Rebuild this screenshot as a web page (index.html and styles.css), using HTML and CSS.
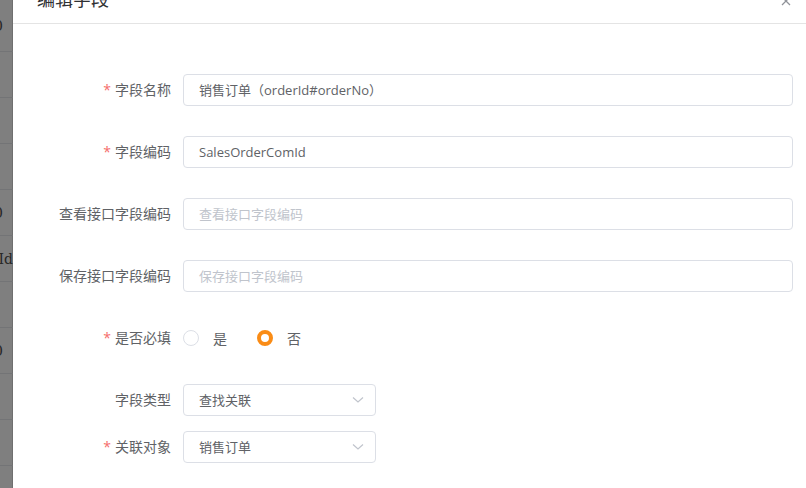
FILE: index.html
```html
<!DOCTYPE html>
<html>
<head>
    <title>编辑字段</title>
    <link rel="stylesheet" href="styles.css">
</head>
<body>
<div class="page">
    <div class="backdrop">
        <div class="bg-row bg-first"><span class="bg-text bg-round">0</span></div>
        <div class="bg-row"></div>
        <div class="bg-row"></div>
        <div class="bg-row"></div>
        <div class="bg-row"><span class="bg-text bg-round">0</span></div>
        <div class="bg-row"><span class="bg-text">orderId</span></div>
        <div class="bg-row"></div>
        <div class="bg-row"><span class="bg-text bg-round">0</span></div>
        <div class="bg-row"></div>
        <div class="bg-row"></div>
        <div class="bg-row"></div>
    </div>

    <div class="dialog">
        <div class="dialog-header">
            <span class="dialog-title">编辑字段</span>
            <span class="dialog-close">
                <svg width="10" height="10" viewBox="0 0 10 10">
                    <path d="M1 1 L9 9 M9 1 L1 9" stroke="#909399" stroke-width="1.3" fill="none"/>
                </svg>
            </span>
        </div>

        <div class="dialog-body">
            <div class="form-item">
                <label class="form-label required">字段名称</label>
                <div class="form-control">
                    <div class="input">销售订单（orderId#orderNo）</div>
                </div>
            </div>
            <div class="form-item">
                <label class="form-label required">字段编码</label>
                <div class="form-control">
                    <div class="input">SalesOrderComId</div>
                </div>
            </div>
            <div class="form-item">
                <label class="form-label">查看接口字段编码</label>
                <div class="form-control">
                    <div class="input placeholder">查看接口字段编码</div>
                </div>
            </div>
            <div class="form-item">
                <label class="form-label">保存接口字段编码</label>
                <div class="form-control">
                    <div class="input placeholder">保存接口字段编码</div>
                </div>
            </div>
            <div class="form-item">
                <label class="form-label required">是否必填</label>
                <div class="form-control radios">
                    <span class="radio"><span class="radio-dot"></span>是</span>
                    <span class="radio checked"><span class="radio-dot"></span>否</span>
                </div>
            </div>
            <div class="form-item tight">
                <label class="form-label">字段类型</label>
                <div class="form-control">
                    <div class="input select">查找关联
                        <svg class="arrow" width="12" height="8" viewBox="0 0 12 8">
                            <path d="M1 1.5 L6 6 L11 1.5" stroke="#c0c4cc" stroke-width="1.2" fill="none"/>
                        </svg>
                    </div>
                </div>
            </div>
            <div class="form-item">
                <label class="form-label required">关联对象</label>
                <div class="form-control">
                    <div class="input select">销售订单
                        <svg class="arrow" width="12" height="8" viewBox="0 0 12 8">
                            <path d="M1 1.5 L6 6 L11 1.5" stroke="#c0c4cc" stroke-width="1.2" fill="none"/>
                        </svg>
                    </div>
                </div>
            </div>
        </div>
    </div>
</div>
</body>
</html>
```

FILE: styles.css
```css
html, body {
    margin: 0;
    height: 100%;
    overflow: hidden;
    background: #ffffff;
    font-family: "Open Sans", "Noto Sans CJK SC", sans-serif;
}

.page {
    display: flex;
    height: 100%;
}

/* grey table behind the dialog */
.backdrop {
    width: 13px;
    flex-shrink: 0;
    background: #7f7f7f;
    overflow: hidden;
    box-shadow: inset -1px 0 0 #6f6f6f;
}
.bg-row {
    height: 45px;
    border-bottom: 1px solid #737476;
    display: flex;
    justify-content: flex-end;
    align-items: center;
}
.bg-first {
    height: 51px;
}
.bg-text {
    font-family: "DejaVu Serif", serif;
    font-size: 14px;
    color: #262626;
    white-space: nowrap;
}
.bg-round {
    margin-right: 10px;
}

.dialog {
    flex: 1;
    background: #ffffff;
}

.dialog-header {
    margin-top: -16px;
    height: 39px;
    border-bottom: 1px solid #e4e4e4;
    display: flex;
    justify-content: space-between;
    align-items: flex-start;
    padding: 0 15px 0 24px;
}
.dialog-title {
    padding-top: 3px;
    font-size: 18px;
    line-height: 24px;
    color: #303133;
}
.dialog-close {
    margin-top: 12px;
    line-height: 0;
}

.dialog-body {
    padding: 50px 13px 0 40px;
}

.form-item {
    display: flex;
    margin-bottom: 30px;
}
.form-item.tight {
    margin-bottom: 15px;
}
.form-label {
    width: 130px;
    flex-shrink: 0;
    box-sizing: border-box;
    padding-right: 12px;
    text-align: right;
    white-space: nowrap;
    font-size: 14px;
    line-height: 32px;
    color: #606266;
}
.form-label.required::before {
    content: "*";
    color: #f56c6c;
    margin-right: 4px;
}
.form-control {
    flex: 1;
}

.input {
    height: 32px;
    box-sizing: border-box;
    border: 1px solid #dcdfe6;
    border-radius: 4px;
    padding: 0 15px;
    font-size: 13px;
    line-height: 30px;
    color: #606266;
    white-space: nowrap;
}
.input.placeholder {
    color: #c0c4cc;
}
.input.select {
    width: 193px;
    display: flex;
    justify-content: space-between;
    align-items: center;
    padding-right: 11px;
}

.radios {
    display: flex;
    align-items: center;
    height: 32px;
}
.radio {
    display: flex;
    align-items: center;
    font-size: 14px;
    color: #606266;
    margin-right: 30px;
}
.radio-dot {
    width: 16px;
    height: 16px;
    box-sizing: border-box;
    border: 1px solid #dcdfe6;
    border-radius: 50%;
    margin-right: 14px;
}
.radio.checked .radio-dot {
    border: 4px solid #fa8c16;
}
```
